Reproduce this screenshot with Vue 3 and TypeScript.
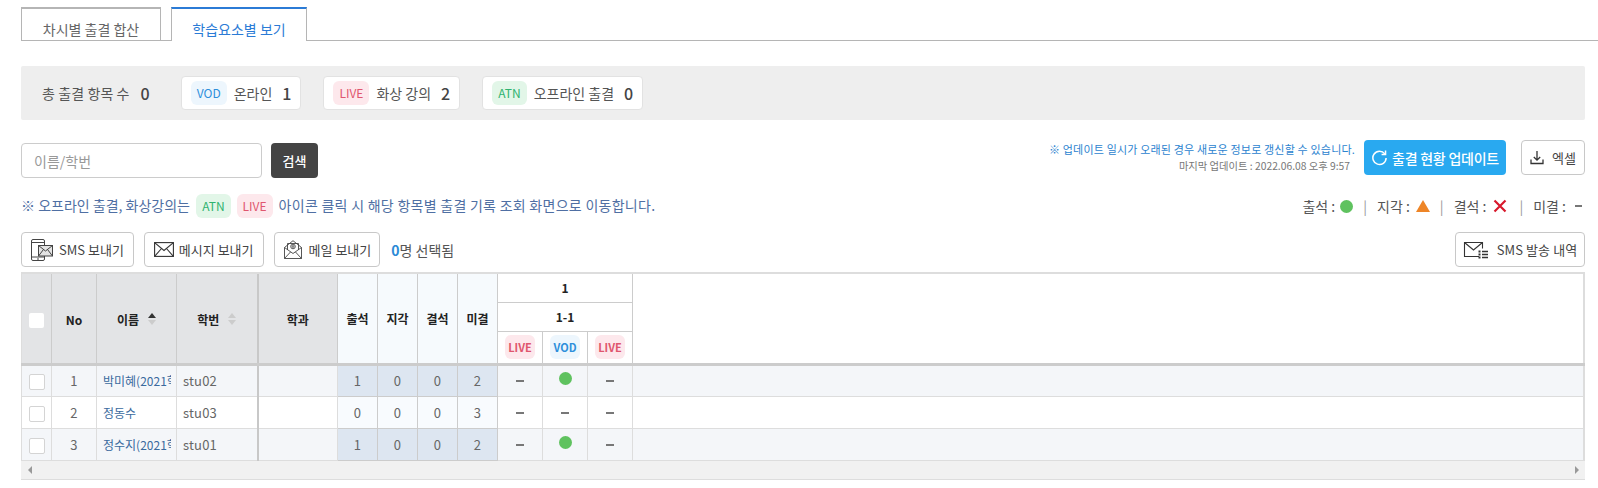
<script setup lang="ts">
interface Student {
  no: number;
  name: string;
  id: string;
  stats: number[];
  marks: boolean[];
}

const students: Student[] = [
  { no: 1, name: '박미혜(2021학번)', id: 'stu02', stats: [1, 0, 0, 2], marks: [false, true, false] },
  { no: 2, name: '정동수', id: 'stu03', stats: [0, 0, 0, 3], marks: [false, false, false] },
  { no: 3, name: '정수지(2021학번)', id: 'stu01', stats: [1, 0, 0, 2], marks: [false, true, false] },
];

const statHeads = ['출석', '지각', '결석', '미결'];
const kinds = ['live', 'vod', 'live'];
</script>

<template>
  <div class="page">
    <div class="tabs">
      <div class="tab">차시별 출결 합산</div>
      <div class="tab tab--on">학습요소별 보기</div>
    </div>

    <div class="summary">
      <span class="summary__label">총 출결 항목 수</span>
      <b class="summary__num summary__num--first">0</b>
      <div class="chip">
        <span class="badge badge--vod">VOD</span>
        <span>온라인</span>
        <b class="summary__num">1</b>
      </div>
      <div class="chip">
        <span class="badge badge--live">LIVE</span>
        <span>화상 강의</span>
        <b class="summary__num">2</b>
      </div>
      <div class="chip">
        <span class="badge badge--atn">ATN</span>
        <span>오프라인 출결</span>
        <b class="summary__num">0</b>
      </div>
    </div>

    <div class="toolbar">
      <div class="search">
        <input class="search__input" placeholder="이름/학번" />
        <button class="search__btn">검색</button>
      </div>
      <div class="update">
        <div class="update__info">
          <p class="update__notice">※ 업데이트 일시가 오래된 경우 새로운 정보로 갱신할 수 있습니다.</p>
          <p class="update__time">마지막 업데이트 : 2022.06.08 오후 9:57</p>
        </div>
        <button class="update__btn">
          <svg width="17" height="17" viewBox="0 0 18 18" fill="none" stroke="#fff" stroke-width="1.6">
            <path d="M14.6 5.2A7 7 0 1 0 16 9.5" />
            <path d="M15.4 1.6v4.2h-4.2" />
          </svg>
          출결 현황 업데이트
        </button>
        <button class="btn btn--excel">
          <svg width="14" height="15" viewBox="0 0 14 15" fill="none" stroke="#333" stroke-width="1.3">
            <path d="M7 1v9M3.800 7 7 10.200 10.200 7" />
            <path d="M1 9.500v4h12v-4" />
          </svg>
          엑셀
        </button>
      </div>
    </div>

    <div class="notes">
      <p class="notes__text">
        ※ 오프라인 출결, 화상강의는
        <span class="badge badge--atn">ATN</span>
        <span class="badge badge--live">LIVE</span>
        <span class="notes__rest">아이콘 클릭 시 해당 항목별 출결 기록 조회 화면으로 이동합니다.</span>
      </p>
      <div class="legend">
        <span>출석 :</span><i class="dot"></i>
        <em class="legend__sep">|</em>
        <span>지각 :</span><i class="tri"></i>
        <em class="legend__sep">|</em>
        <span>결석 :</span>
        <svg class="legend__x" width="14" height="14" viewBox="0 0 14 14" stroke="#d8192c" stroke-width="2.2">
          <path d="M1.500 1.500l11 11M12.500 1.500l-11 11" />
        </svg>
        <em class="legend__sep">|</em>
        <span>미결 :</span><i class="dash dash--legend"></i>
      </div>
    </div>

    <div class="actions">
      <button class="btn btn--sms">
        <svg width="22" height="22" viewBox="0 0 22 22" fill="#fff" stroke="#444" stroke-width="1">
          <rect x="0.500" y="0.500" width="13" height="21" rx="1.500" />
          <path d="M0.500 3.500h13M0.500 18h13M6 20h2" />
          <rect x="7.500" y="6.500" width="14" height="10.500" fill="#e4e4e4" />
          <path d="M7.500 6.500l7 5.500 7-5.500M7.500 17l5-6.500M21.500 17l-5-6.500" fill="none" />
        </svg>
        SMS 보내기
      </button>
      <button class="btn btn--msg">
        <svg width="20" height="15" viewBox="0 0 20 15" fill="none" stroke="#333" stroke-width="1.100">
          <rect x="0.600" y="0.600" width="18.800" height="13.800" />
          <path d="M0.600 0.600 10 8.500l9.400-7.900M0.600 14.400 7.500 6.500M19.400 14.400 12.500 6.500" />
        </svg>
        메시지 보내기
      </button>
      <button class="btn btn--mail">
        <svg width="18" height="19" viewBox="0 0 18 19" fill="none" stroke="#444" stroke-width="0.900">
          <path d="M0.500 7.500V18.500h17V7.500L9 0.700z" />
          <path d="M3.500 10V3.500h11V10" />
          <circle cx="9" cy="6.500" r="2.300" />
          <circle cx="9" cy="6.500" r="0.900" />
          <path d="M0.500 7.500 9 13.500l8.500-6M0.500 18.500 6.500 12M17.500 18.500 11.500 12" />
        </svg>
        메일 보내기
      </button>
      <span class="selected"><b>0</b>명 선택됨</span>
      <button class="btn btn--history">
        <svg width="26" height="18" viewBox="0 0 26 18" fill="none" stroke="#333" stroke-width="1.100">
          <path d="M16 15.500H1.500v-14h18v6" />
          <path d="M1.500 1.500 10.500 9l9-7.500" />
          <path d="M19 10.500h6M19 13.500h6M19 16.500h6" stroke-width="1.300" />
          <path d="M15.500 10.500h2M15.500 13.500h2M15.500 16.500h2" stroke-width="1.800" />
        </svg>
        SMS 발송 내역
      </button>
    </div>

    <div class="grid">
      <table class="grid__table">
        <colgroup>
          <col class="c-check" />
          <col class="c-no" />
          <col class="c-name" />
          <col class="c-id" />
          <col class="c-dept" />
          <col v-for="h in statHeads" :key="h" class="c-stat" />
          <col v-for="(k, i) in kinds" :key="i" class="c-mark" />
          <col />
        </colgroup>
        <thead>
          <tr class="row-a">
            <th rowspan="3" class="head-fixed"><i class="check check--head"></i></th>
            <th rowspan="3" class="head-fixed">No</th>
            <th rowspan="3" class="head-fixed">
              <span class="sort-label">이름<i class="sort"><i class="sort__up sort__up--on"></i><i class="sort__down"></i></i></span>
            </th>
            <th rowspan="3" class="head-fixed head-fixed--edge">
              <span class="sort-label">학번<i class="sort"><i class="sort__up"></i><i class="sort__down"></i></i></span>
            </th>
            <th rowspan="3" class="head-fixed">학과</th>
            <th v-for="h in statHeads" :key="h" rowspan="3" class="head-stat">{{ h }}</th>
            <th colspan="3" class="head-group">1</th>
            <th rowspan="3" class="head-rest"></th>
          </tr>
          <tr class="row-b">
            <th colspan="3" class="head-group">1-1</th>
          </tr>
          <tr class="row-c">
            <th v-for="(k, i) in kinds" :key="i" class="head-kind">
              <span :class="['badge', 'badge--small', `badge--${k}`]">{{ k.toUpperCase() }}</span>
            </th>
          </tr>
        </thead>
        <tbody>
          <tr v-for="(s, r) in students" :key="s.no" :class="{ 'odd': r % 2 === 0 }">
            <td class="center"><i class="check"></i></td>
            <td class="center">{{ s.no }}</td>
            <td><span class="name">{{ s.name }}</span></td>
            <td class="cell-edge">{{ s.id }}</td>
            <td></td>
            <td v-for="(v, i) in s.stats" :key="i" class="center stat">{{ v }}</td>
            <td v-for="(m, i) in s.marks" :key="i" class="center mark">
              <i v-if="m" class="dot"></i>
              <i v-else class="dash"></i>
            </td>
            <td></td>
          </tr>
        </tbody>
      </table>
      <div class="scrollbar">
        <i class="scrollbar__arrow"></i>
        <i class="scrollbar__arrow scrollbar__arrow--next"></i>
      </div>
    </div>
  </div>
</template>

<style>
html,
body {
  margin: 0;
  background: #fff;
}
</style>

<style scoped>
.page {
  box-sizing: border-box;
  width: 1598px;
  height: 488px;
  padding: 7px 13px 0 21px;
  overflow: hidden;
  font-family: "Noto Sans CJK KR", "Noto Sans", sans-serif;
  font-size: 14px;
  color: #555;
}

p {
  margin: 0;
}

button {
  font-family: inherit;
  cursor: pointer;
}

/* tabs */
.tabs {
  display: flex;
  gap: 10px;
  height: 33px;
  margin-right: -13px;
  border-bottom: 1px solid #b5b5b5;
}

.tab {
  box-sizing: border-box;
  width: 140px;
  height: 33px;
  border: 1px solid #b5b5b5;
  border-top-width: 2px;
  border-bottom: 0;
  line-height: 40px;
  text-align: center;
  color: #666;
}

.tab--on {
  width: 136px;
  height: 34px;
  background: #fff;
  border-top: 2px solid #2b7bd6;
  color: #2b7bd6;
}

/* summary bar */
.summary {
  display: flex;
  align-items: center;
  height: 54px;
  margin-top: 25px;
  padding-left: 21px;
  background: #eee;
  border-radius: 2px;
}

.summary__label {
  margin-right: 11px;
  letter-spacing: 0.1px;
}

.summary__num {
  margin-left: 11px;
  font-size: 16px;
  font-weight: 500;
  color: #444;
}

.summary__num--first {
  margin-left: 0;
  margin-right: 31px;
}

.chip {
  box-sizing: border-box;
  display: flex;
  align-items: center;
  gap: 7px;
  height: 34px;
  margin-right: 22px;
  padding: 0 9px;
  background: #fff;
  border: 1px solid #e2e2e2;
  border-radius: 4px;
}

.chip .summary__num {
  margin-left: 3px;
}

.badge {
  display: inline-block;
  padding: 0 6px;
  height: 24px;
  line-height: 24px;
  border-radius: 6px;
  font-size: 12px;
}

.badge--vod {
  background: #edf6fd;
  color: #2e8fdb;
}

.badge--live {
  background: #fde8ec;
  color: #e0566e;
}

.badge--atn {
  background: #e2f6e8;
  color: #2fb36f;
}

.badge--small {
  padding: 0 3px;
  font-size: 11px;
  font-weight: 700;
}

/* search and update */
.toolbar {
  display: flex;
  justify-content: space-between;
  height: 35px;
  margin-top: 20px;
}

.search {
  display: flex;
  gap: 9px;
  padding-top: 3px;
}

.search__input {
  box-sizing: border-box;
  width: 241px;
  height: 35px;
  padding: 0 12px;
  border: 1px solid #ccc;
  border-radius: 4px;
  font-family: inherit;
  font-size: 14px;
}

.search__input::placeholder {
  color: #999;
}

.search__btn {
  width: 47px;
  height: 35px;
  border: 0;
  border-radius: 4px;
  background: #444;
  color: #fff;
  font-size: 13px;
  font-weight: 500;
}

.update {
  display: flex;
  align-items: flex-start;
}

.update__info {
  margin-right: 9px;
  text-align: right;
}

.update__notice {
  font-size: 11px;
  line-height: 16px;
  margin-top: 1px;
  letter-spacing: 0.18px;
  color: #2c83cf;
}

.update__time {
  margin-top: 1px;
  padding-right: 5px;
  font-size: 10.3px;
  line-height: 16px;
  color: #777;
}

.update__btn {
  display: flex;
  align-items: center;
  justify-content: center;
  gap: 4px;
  width: 142px;
  height: 35px;
  border: 0;
  border-radius: 4px;
  background: #29a9f0;
  color: #fff;
  font-size: 14px;
  font-weight: 500;
  letter-spacing: -0.25px;
}

.btn {
  box-sizing: border-box;
  display: flex;
  align-items: center;
  justify-content: center;
  height: 35px;
  padding: 0;
  background: #fff;
  border: 1px solid #c8c8c8;
  border-radius: 4px;
  color: #444;
  font-size: 13px;
  white-space: nowrap;
}

.btn--excel {
  width: 64px;
  gap: 8px;
  margin-left: 15px;
}

/* note line */
.notes {
  display: flex;
  justify-content: space-between;
  align-items: center;
  height: 24px;
  margin-top: 19px;
}

.notes__text {
  color: #4f6fa3;
  font-size: 14px;
}

.notes__text .badge {
  margin: 0 3px;
}

.notes__rest {
  margin-left: 3px;
  letter-spacing: 0.27px;
}

.legend {
  display: flex;
  align-items: center;
  gap: 5px;
  padding-right: 3px;
  font-size: 14px;
  color: #555;
}

.legend__sep {
  margin: 0 5px;
  font-style: normal;
  color: #999;
}

.legend__x {
  margin: 0 2px;
}

.dot {
  display: inline-block;
  width: 13px;
  height: 13px;
  border-radius: 50%;
  background: #5fc25f;
}

.tri {
  width: 0;
  height: 0;
  margin-left: 1px;
  border-left: 7px solid transparent;
  border-right: 7px solid transparent;
  border-bottom: 12px solid #ee8527;
}

.dash {
  display: inline-block;
  width: 8px;
  height: 2px;
  background: #777;
  vertical-align: middle;
}

.dash--legend {
  width: 7px;
  margin-left: 4px;
}

/* action buttons */
.actions {
  display: flex;
  align-items: center;
  gap: 10px;
  height: 35px;
  margin-top: 14px;
}

.btn--sms {
  gap: 6px;
  padding: 0 9px;
}

.btn--msg {
  gap: 5px;
  padding: 0 9px;
}

.btn--mail {
  gap: 7px;
  padding: 0 8px 0 9px;
}

.selected {
  margin-left: 1px;
  color: #555;
}

.selected b {
  color: #2b8ad6;
  font-weight: 700;
}

.btn--history {
  width: 130px;
  gap: 8px;
  margin-left: auto;
  letter-spacing: 0.1px;
}

/* table */
.grid {
  margin-top: 5px;
  border-top: 2px solid #ddd;
}

.grid__table {
  width: 100%;
  table-layout: fixed;
  border-collapse: collapse;
  border-right: 2px solid #ddd;
  font-size: 12px;
}

.c-check {
  width: 30px;
}

.c-no {
  width: 45px;
}

.c-name {
  width: 80px;
}

.c-id {
  width: 81px;
}

.c-dept {
  width: 80px;
}

.c-stat {
  width: 40px;
}

.c-mark {
  width: 45px;
}

th {
  padding: 0;
  border: 1px solid #ccc;
  border-top: 0;
  color: #222;
  font-size: 12px;
  font-weight: 700;
}

.row-a {
  height: 28px;
}

.row-b {
  height: 29px;
}

.row-c {
  height: 33px;
}

.head-fixed {
  background: #e3e4e6;
  padding-top: 2px;
}

.head-fixed--edge {
  border-right: 2px solid #c8c8c8;
}

.head-stat {
  background: #f6fafd;
}

.head-group {
  background: #fff;
}

.head-kind {
  background: #fff;
}

.head-rest {
  border: 0;
  background: #fff;
}

thead {
  border-bottom: 3px solid #ccc;
}

td {
  height: 32px;
  padding: 0 0 0 6px;
  box-sizing: border-box;
  border: 1px solid #ddd;
  color: #666;
  font-size: 13px;
  letter-spacing: 0.2px;
  white-space: nowrap;
  overflow: hidden;
}

td:first-child,
th:first-child {
  border-left: 1px solid #ddd;
}

.center {
  padding: 0;
  text-align: center;
}

.odd td {
  background: #f4f6f9;
}

.stat {
  background: #f8fbfe;
  border-color: #ccc;
}

.odd .stat {
  background: #dde6f1;
}

.cell-edge {
  border-right: 2px solid #c8c8c8;
}

.name {
  display: block;
  width: 68px;
  overflow: hidden;
  font-size: 12px;
  letter-spacing: 0;
  color: #3a6a9e;
}

.mark .dash {
  vertical-align: 4px;
}

.mark .dot {
  vertical-align: 1px;
}

.check {
  box-sizing: border-box;
  display: inline-block;
  width: 16px;
  height: 16px;
  background: #fff;
  border: 1px solid #d4d4d4;
  border-radius: 2px;
  vertical-align: middle;
}

.check--head {
  border: 0;
  width: 15px;
  height: 15px;
}

.sort-label {
  display: inline-flex;
  align-items: center;
  gap: 9px;
}

.sort {
  display: inline-flex;
  flex-direction: column;
  gap: 2px;
}

.sort__up,
.sort__down {
  width: 0;
  height: 0;
  border-left: 4px solid transparent;
  border-right: 4px solid transparent;
}

.sort__up {
  border-bottom: 5px solid #ccc;
}

.sort__up--on {
  border-bottom-color: #333;
}

.sort__down {
  border-top: 5px solid #ccc;
}

.scrollbar {
  display: flex;
  justify-content: space-between;
  align-items: center;
  height: 18px;
  padding: 0 6px 0 7px;
  background: #f1f1f1;
  border-bottom: 1px solid #ddd;
}

.scrollbar__arrow {
  width: 0;
  height: 0;
  border-top: 4px solid transparent;
  border-bottom: 4px solid transparent;
  border-right: 4px solid #999;
}

.scrollbar__arrow--next {
  border-right: 0;
  border-left: 4px solid #999;
}
</style>
